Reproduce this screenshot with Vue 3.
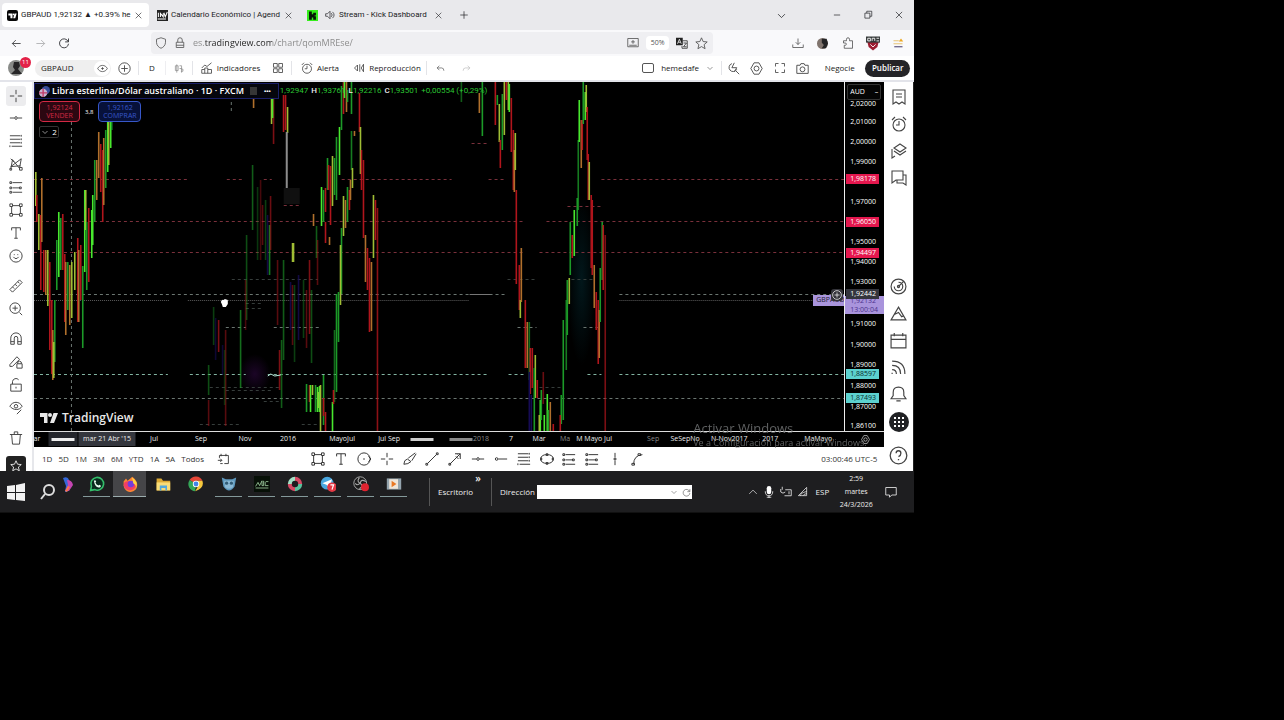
<script setup>
import { h } from 'vue'

const icons = {
  back: 'M14 8H2M7 3L2 8l5 5',
  forward: 'M2 8h12M9 3l5 5-5 5',
  reload: 'M13.500 6A6 6 0 1 0 14 9M14 2v4.500H9.500',
  close: 'M3 3l10 10M13 3L3 13',
  plus: 'M8 2v12M2 8h12',
  down: 'M3 6l5 5 5-5',
  up: 'M2 11l6-6 6 6',
  minus: 'M3 8h10',
  restore: 'M3 5h8v8H3zM6 5V2h8v8h-3',
  shield: 'M8 1l6 2v4c0 4-3 7-6 8-3-1-6-4-6-8V3z',
  lock: 'M3 7h10v7H3zM5 7V4a3 3 0 0 1 6 0v3M3 11h10',
  tray: 'M1 2h14v11H1zM3 11h10M8 4v5M5.500 6.500h5',
  star: 'M8 1l2 4.600 5 .5-3.800 3.300 1.200 5L8 11.800 3.600 14.400l1.200-5L1 6.100l5-.5z',
  download: 'M8 2v8M5 7l3 3 3-3M1 10v4h14v-4',
  puzzle: 'M2 5h4V3a2 2 0 0 1 4 0v2h4v10H3v-4h2a2 2 0 0 0 0-3H2z',
  eye: 'M1 8c3-6 11-6 14 0-3 6-11 6-14 0zM8 6v4M6 8h4',
  circlePlus: 'M8 1a7 7 0 1 1 0 14A7 7 0 0 1 8 1M8 4v8M4 8h8',
  candles: 'M4 2v12M2 4h4v7H2zM8 4h3v4H8M11 7v7M10 9h3v3h-3',
  indicator: 'M1 8l4-4 3 2 6-5M1 15v-5h4V8h4v2h5v5zM5 10v5M9 10v5',
  grid: 'M2 2h5v5H2zM9 2h5v5H9zM2 9h5v5H2zM9 9h5v5H9z',
  alarm: 'M8 3a6 6 0 1 1 0 12A6 6 0 0 1 8 3M8 5v4H5M1 4l3-3M15 4l-3-3',
  replay: 'M6 4L2 8l4 4zM9 3v10M14 3v10l-3-5z',
  undo: 'M6 3L2 7l4 4M2 7h8q4 0 4 5',
  redo: 'M10 3l4 4-4 4M14 7H6q-4 0-4 5',
  quick: 'M6 2a5 5 0 1 0 6 7M11 11l4 4M9 1L6 7h6l-3 5',
  hex: 'M5 1h6l4 7-4 7H5L1 8zM8 5a3 3 0 1 1 0 6 3 3 0 0 1 0-6',
  full: 'M2 6V2h4M10 2h4v4M14 10v4h-4M6 14H2v-4',
  camera: 'M1 4h4l1-2h4l1 2h4v10H1zM8 6a3 3 0 1 1 0 6 3 3 0 0 1 0-6',
  cross: 'M8 1v5M8 10v5M1 8h5M10 8h5',
  hline: 'M1 8h5M10 8h5M8 6.500a1.500 1.500 0 1 1 0 3 1.500 1.500 0 0 1 0-3',
  ray: 'M5 8h10M3 6.500a1.500 1.500 0 1 1 0 3 1.500 1.500 0 0 1 0-3',
  fib: 'M1 2h12M1 6h12M1 10h12M3 14h12M14 1v2M14 5v2M14 9v2M1 13v2',
  pattern: 'M2 14L4 3l8 10 2-11L2 11l11-1M2 2l4 4M1 13h2v2H1zM12 12h3v3h-3z',
  forecast: 'M4 3h11M4 9h8M4 14h11M3 2v2H1V2zM3 8v2H1V8zM3 13v2H1v-2zM12 8h2v2h-2z',
  box: 'M4 3h8M13 4v8M4 13h8M3 4v8M1 1h3v3H1zM12 1h3v3h-3zM12 12h3v3h-3zM1 12h3v3H1z',
  text: 'M3 5V2h10v3M8 2v12M6 14h4',
  smile: 'M8 1a7 7 0 1 1 0 14A7 7 0 0 1 8 1M6 6v1M10 6v1M5 9q3 4 6 0',
  ruler: 'M1 12L12 1l3 3L4 15zM4 9l2 2M7 6l2 2M10 3l2 2',
  zoom: 'M7 1a6 6 0 1 0 0 12A6 6 0 0 0 7 1M12 12l3 3M7 4v6M4 7h6',
  magnet: 'M2 14V7a6 6 0 0 1 12 0v7h-4V7a2 2 0 0 0-4 0v7zM2 11h4M10 11h4',
  penlock: 'M1 11L9 2l3 3-8 8H1zM9 10h6v5H9zM10 10V8q2-2 4 0v2',
  unlock: 'M2 7h12v8H2zM4 7V4a4 4 0 0 1 7-2M8 10v2',
  eyepen: 'M1 6c3-6 11-6 14 0-3 5-10 5-14 0zM8 4a2 2 0 1 1 0 4 2 2 0 0 1 0-4M9 15l5-5',
  trash: 'M1 4h14M3 4l1 11h8l1-11M6 4V1h4v3',
  list: 'M2 1h12v14l-3-2-3 2-3-2-3 2zM5 5h6M5 8h6',
  layers: 'M9 1l6 4-6 4-6-4zM3 8l6 4 6-4M1 6v9l3-2',
  chat: 'M1 1h11v9H5l-4 3zM12 5h3v10l-3-2H6v-3',
  target: 'M8 1a7 7 0 1 1 0 14A7 7 0 0 1 8 1M8 4a4 4 0 1 1-4 4M8 7a1 1 0 1 1 0 2 1 1 0 0 1 0-2M8 8l5-5',
  peak: 'M8 2l7 12H1zM4 9l4-2 3 4 2-1',
  calendar: 'M1 3h14v12H1zM1 7h14M4 1v3M12 1v3',
  feed: 'M2 2q12 0 12 12M2 6q8 0 8 8M2 10q4 0 4 4M2 13v1',
  bell: 'M1 12h14l-2-3V6q0-5-5-5T3 6v3zM6 14h4',
  help: 'M8 1a7 7 0 1 1 0 14A7 7 0 0 1 8 1M6 6q0-2 2-2t2 2-2 3M8 11v1',
  circle: 'M8 1a7 7 0 1 1 0 14A7 7 0 0 1 8 1M7 8h2M13 5l3 3-3 3',
  brush: 'M1 14q0-5 4-6l4 3q-3 3-8 3M6 7l8-6M10 10l5-8',
  trend: 'M3 13L13 3M1 13h2v2H1zM13 1h2v2h-2z',
  arrow: 'M2 14L14 2M8 2h6v6M9 5l3 3M11 3l2 2M1 13h2v2H1z',
  ellipse: 'M8 3q7 0 7 5t-7 5-7-5 7-5M7 2h2v2H7zM7 12h2v2H7zM0 7h2v2H0zM14 7h2v2h-2z',
  vline: 'M8 1v5M8 10v5M7 7h2v2H7z',
  curve: 'M3 14Q3 4 13 3M1 13h3v2H1zM8 2h3v2H8z',
  goto: 'M3 6V3h11v10H9M5 1v3M11 1v3M1 9h5M4 7l2 2-2 2M4 13h3',
  battery: 'M1 4v4q3 3 6 0M3 1v4M7 5h8v8H6M12 7v4',
  wifi: 'M2 14L14 2v12zM5 14q0-4 9-6M9 14q0-2 5-3',
  note: 'M1 2h14v10H9l-3 3v-3H1z',
  speaker: 'M1 6h3l4-4v12l-4-4H1zM10 5q3 3 0 6M12 3q5 5 0 10'
}
const Icon = ({ name, size = 13 }) =>
  h('svg', { class: 'icon', width: size, height: size, viewBox: '0 0 16 16', 'aria-hidden': 'true' },
    [h('path', { d: icons[name] })])
Icon.props = ['name', 'size']

const leftTools = [
  ['cross', 'hline', 'fib', 'pattern', 'forecast', 'box', 'text', 'smile'],
  ['ruler', 'zoom'],
  ['magnet', 'penlock', 'unlock', 'eyepen'],
  ['trash']
]
const rightTop = ['list', 'alarm', 'layers', 'chat']
const rightBottom = ['target', 'peak', 'calendar', 'feed', 'bell']
const drawTools = ['box', 'text', 'circle', 'cross', 'brush', 'trend', 'arrow', 'hline', 'ray', 'fib', 'ellipse', 'forecast', 'forecast', 'vline', 'curve']
const ranges = ['1D', '5D', '1M', '3M', '6M', 'YTD', '1A', '5A', 'Todos']

const view = { x: 34, y: 82, w: 811, h: 349 }
const topOf = y => ({ top: ((y - view.y) / view.h) * 100 + '%' })
const leftOf = x => ({ left: ((x - view.x) / 850) * 100 + '%' })

const prices = [
  [104, '2,02000'], [122, '2,01000'], [142, '2,00000'], [162, '1,99000'], [202, '1,97000'], [242, '1,95000'],
  [262, '1,94000'], [282, '1,93000'], [324, '1,91000'], [345, '1,90000'], [365, '1,89000'],
  [386, '1,88000'], [407, '1,87000'], [426, '1,86100'],
  [179, '1,98178', 'red'], [222, '1,96050', 'red'], [253, '1,94497', 'red'],
  [374, '1,88597', 'cyan'], [398, '1,87493', 'cyan']
]
const dates = [
  [37, 'ar'], [154, 'Jul'], [201, 'Sep'], [245, 'Nov'], [288, '2016'], [342, 'MayoJul'], [389, 'Jul Sep'],
  [481, '2018', 'dim'], [511, '7'], [539, 'Mar'], [565, 'Ma', 'dim'], [594, 'M Mayo Jul'], [653, 'Sep', 'dim'],
  [685, 'SeSepNo'], [729, 'N-Nov2017'], [770, '2017'], [818, 'MaMayo']
]

const levels = [
  [34, 190, 179, 'r'], [264, 272, 179, 'r'], [342, 452, 179, 'r'], [489, 506, 179, 'r'], [602, 845, 179, 'r'], [227, 243, 179, 'r'],
  [34, 526, 221, 'r'], [547, 845, 221, 'r'], [34, 525, 252, 'r'], [540, 845, 252, 'r'], [472, 488, 143, 'r'],
  [284, 300, 205, 'r'], [568, 602, 206, 'r'], [232, 318, 279, 'g'], [508, 538, 279, 'g'], [572, 596, 279, 'g'],
  [34, 506, 294, 'w'], [620, 845, 294, 'w'], [246, 262, 303, 'g'], [246, 262, 308, 'g'],
  [226, 246, 327, 'w'], [274, 320, 327, 'w'], [518, 537, 327, 'w'], [584, 602, 327, 'w'],
  [34, 168, 374, 't'], [190, 246, 374, 't'], [268, 490, 374, 't'], [509, 525, 374, 't'], [588, 602, 374, 't'], [620, 845, 374, 't'],
  [210, 280, 387, 'g'], [540, 563, 387, 'g'], [34, 845, 398, 'w'], [226, 274, 390, 'g'], [264, 280, 401, 'g'], [200, 242, 424, 'g'], [302, 320, 424, 'g']
]

/* [x, high, low, colour key, opacity] */
const bars = [
  [35, 172, 206, 'y'], [36, 195, 222, 'r'], [38, 214, 250, 'y'], [40, 215, 290, 'r'], [41, 178, 242, 'o'], [43, 250, 292, 'r'],
  [45, 250, 295, 'o'], [47, 250, 306, 'y'], [49, 262, 350, 'r'], [51, 300, 374, 'r'], [52, 330, 380, 'o'], [54, 300, 362, 'g'],
  [53, 342, 378, 'y'], [56, 240, 290, 'g'], [58, 212, 277, 'b'], [60, 218, 270, 'g'], [62, 214, 270, 'r'], [64, 254, 322, 'r'],
  [65, 262, 335, 'o'], [67, 262, 310, 'g'], [69, 265, 325, 'o'], [71, 262, 318, 'y'], [74, 252, 290, 'y'], [77, 238, 322, 'r'],
  [78, 250, 322, 'o'], [80, 245, 300, 'r'], [82, 266, 348, 'g'], [84, 190, 272, 'b'], [85, 190, 230, 'y'], [86, 222, 290, 'g'],
  [88, 208, 282, 'r'], [91, 210, 258, 'b'], [92, 195, 245, 'b'], [94, 160, 222, 'g'], [96, 160, 200, 'o'], [98, 132, 178, 'o'],
  [100, 144, 192, 'r'], [102, 150, 222, 'r'], [103, 138, 205, 'o'], [105, 130, 188, 'g'], [107, 112, 172, 'b'], [108, 112, 165, 'y'],
  [110, 110, 148, 'b'], [111, 110, 130, 'g'],
  [208, 365, 395, 'g', .5], [208, 400, 426, 'r', .5], [213, 307, 345, 'g', .4], [215, 318, 360, 'u', .6], [218, 320, 352, 'r', .7], [222, 345, 375, 'u', .6],
  [225, 330, 426, 'r', .5], [224, 350, 405, 'g', .3], [240, 310, 388, 'g', .7], [246, 235, 320, 'g', .5], [245, 280, 330, 'r', .4],
  [252, 165, 230, 'g', .6], [253, 90, 108, 'o'], [257, 187, 260, 'g', .35], [260, 180, 260, 'r', .4], [262, 205, 245, 'r', .5],
  [265, 200, 260, 'g', .4], [267, 215, 275, 'u', .8], [269, 225, 275, 'g', .8], [270, 196, 250, 'r', .6], [271, 94, 124, 'y'], [273, 95, 144, 'r', .7],
  [272, 94, 118, 'b'], [277, 260, 325, 'r', .5], [279, 350, 390, 'r', .7], [281, 340, 408, 'g', .6], [283, 260, 360, 'g', .6], [283, 95, 132, 'r'],
  [285, 95, 130, 'r'], [287, 107, 133, 'y'], [290, 282, 330, 'u', .8], [292, 285, 345, 'r', .5], [292, 243, 262, 'y'], [293, 243, 262, 'y'], [294, 285, 362, 'g', .4],
  [298, 275, 340, 'u', .8], [303, 280, 338, 'g', .4], [306, 290, 348, 'r', .5], [309, 260, 334, 'r', .7], [311, 290, 363, 'g', .5],
  [306, 384, 412, 'g'], [309, 385, 402, 'r'], [310, 385, 412, 'b'], [312, 385, 395, 'y'], [315, 385, 412, 'g'], [317, 387, 412, 'b'], [318, 392, 408, 'y'], [319, 386, 412, 'b'],
  [313, 214, 226, 'o'], [316, 226, 258, 'g', .6], [317, 240, 285, 'r', .5], [321, 187, 226, 'b'], [323, 190, 222, 'g'], [325, 188, 212, 'r'],
  [327, 158, 190, 'g'], [328, 165, 190, 'r'], [330, 166, 225, 'r'], [325, 222, 243, 'r'], [329, 237, 245, 'o'],
  [332, 156, 206, 'y'], [334, 158, 195, 'g'], [336, 137, 200, 'g'], [339, 127, 175, 'b'], [341, 86, 130, 'g'], [343, 82, 114, 'r'],
  [344, 82, 98, 'b'], [346, 82, 112, 'o'], [347, 90, 102, 'g'], [351, 82, 114, 'g'], [351, 131, 170, 'g', .8], [354, 131, 136, 'o'],
  [343, 196, 236, 'y'], [345, 200, 228, 'o'], [347, 187, 222, 'g'], [349, 190, 210, 'r'], [350, 180, 200, 'o'], [352, 168, 188, 'y'],
  [341, 228, 294, 'g'], [340, 245, 305, 'y'], [338, 292, 342, 'g'], [336, 294, 392, 'g'], [334, 330, 402, 'g', .7], [332, 402, 431, 'b'],
  [333, 390, 404, 'r'], [320, 385, 431, 'y'], [323, 375, 425, 'g'], [325, 412, 431, 'r'], [323, 398, 416, 'r'],
  [359, 93, 132, 'r'], [360, 127, 174, 'y'], [361, 150, 190, 'r'], [363, 160, 238, 'r'], [365, 235, 282, 'o'], [367, 248, 290, 'r'],
  [369, 258, 332, 'r'], [371, 262, 331, 'o'], [373, 195, 258, 'y'], [375, 200, 240, 'r'], [377, 208, 431, 'r', .8],
  [461, 82, 102, 'g', .6], [479, 93, 113, 'o'], [482, 82, 136, 'g'], [495, 82, 125, 'r'], [497, 95, 105, 'g'], [499, 104, 142, 'y'], [500, 140, 168, 'r'],
  [502, 94, 150, 'g'], [504, 82, 135, 'y'], [506, 82, 100, 'r'], [508, 82, 110, 'y'], [509, 84, 112, 'b'], [511, 98, 152, 'r'],
  [513, 130, 190, 'r'], [514, 150, 192, 'o'], [515, 133, 170, 'y'], [516, 190, 284, 'r'], [519, 265, 310, 'r'], [520, 300, 318, 'y'], [521, 248, 302, 'o'],
  [525, 300, 368, 'r'], [527, 322, 368, 'o'], [529, 322, 380, 'g', .7], [530, 348, 394, 'r'], [532, 348, 388, 'r'], [529, 372, 431, 'u'], [531, 395, 431, 'u'],
  [535, 355, 398, 'y'], [534, 368, 431, 'g'], [537, 380, 398, 'r'], [540, 400, 431, 'b'], [539, 415, 431, 'y'], [541, 390, 420, 'g'],
  [543, 372, 404, 'r', .6], [544, 415, 431, 'b'], [547, 394, 431, 'b'], [548, 410, 431, 'g'], [550, 402, 431, 'o'], [553, 424, 431, 'r'],
  [561, 395, 424, 'g'], [560, 415, 431, 'r'], [563, 320, 420, 'g'], [566, 300, 370, 'g', .8], [567, 280, 335, 'g'], [569, 278, 304, 'y'],
  [570, 222, 275, 'g'], [572, 235, 258, 'r'], [574, 210, 256, 'b'], [577, 198, 226, 'g'], [578, 140, 210, 'g', .8], [579, 100, 142, 'b'],
  [581, 120, 168, 'o'], [582, 120, 150, 'r'], [583, 82, 124, 'g'], [585, 92, 120, 'b'], [586, 85, 112, 'y'], [587, 107, 160, 'r'],
  [588, 154, 200, 'r'], [589, 162, 200, 'y'], [591, 195, 268, 'r'], [592, 200, 275, 'r'], [594, 265, 308, 'o'], [596, 292, 330, 'r'], [598, 300, 364, 'r'],
  [599, 310, 358, 'o'], [600, 268, 322, 'g'], [602, 222, 280, 'g'], [603, 225, 290, 'r'], [605, 235, 431, 'r', .7]
]
const quotes = [['', '1,92947'], ['H', '1,93761'], ['L', '1,92216'], ['C', '1,93501']]
</script>

<template>
  <div class="screen">
    <div class="desktop">
      <header class="tabs">
        <div class="tab active">
          <svg class="logo" viewBox="0 0 16 16"><rect width="16" height="16" rx="3" fill="#080808" /><path d="M2 5h6v7H5V8H2zM11 5h3l-2 7H9z" fill="#fff" /><circle cx="9.500" cy="6.500" r="1.300" fill="#fff" /></svg>
          <span class="tab-title">GBPAUD 1,92132 ▲ +0.39% he</span>
          <button aria-label="Cerrar pestaña"><Icon name="close" size="9" /></button>
        </div>
        <div class="tab">
          <svg class="logo" viewBox="0 0 16 16"><rect width="16" height="16" fill="#222" /><path d="M2 4v6M5 10V5l4 5V5M10 4l2 6 3-7M1 13h12" fill="none" stroke="#fff" stroke-width="1.500" /></svg>
          <span class="tab-title">Calendario Económico | Agend</span>
          <button aria-label="Cerrar pestaña"><Icon name="close" size="9" /></button>
        </div>
        <div class="tab">
          <svg class="logo" viewBox="0 0 16 16"><rect width="16" height="16" fill="#35ed1b" /><path d="M3 2h4v4h2V4h4v4h-2v1h2v5H9v-3H7v3H3z" fill="#061506" /></svg>
          <span class="sound"><Icon name="speaker" size="10" /></span>
          <span class="tab-title">Stream - Kick Dashboard</span>
          <button aria-label="Cerrar pestaña"><Icon name="close" size="9" /></button>
        </div>
        <button class="new-tab" aria-label="Nueva pestaña"><Icon name="plus" size="10" /></button>
        <div class="window-controls">
          <button class="list-tabs" aria-label="Listar pestañas"><Icon name="down" size="11" /></button>
          <button aria-label="Minimizar"><Icon name="minus" size="10" /></button>
          <button aria-label="Restaurar"><Icon name="restore" size="10" /></button>
          <button aria-label="Cerrar"><Icon name="close" size="10" /></button>
        </div>
      </header>

      <nav class="nav">
        <div class="history">
          <button aria-label="Atrás"><Icon name="back" size="11" /></button>
          <button class="faint" aria-label="Adelante"><Icon name="forward" size="11" /></button>
          <button aria-label="Recargar"><Icon name="reload" size="12" /></button>
        </div>
        <div class="url">
          <Icon name="shield" size="12" /><Icon name="lock" size="12" />
          <input aria-label="Dirección web" value="es.tradingview.com/chart/qomMREse/">
          <Icon name="tray" size="12" />
          <button class="percent">50%</button>
          <svg class="translate" viewBox="0 0 16 16"><path d="M0 1h9v10H0z" fill="#222" /><path d="M2 9l2.500-6L7 9M3 7h3" fill="none" stroke="#fff" /><path d="M9 5h6v10H8v-3M10 8h4l-4 5h4" fill="none" stroke="#222" /></svg>
          <Icon name="star" size="13" />
        </div>
        <div class="extensions">
          <button aria-label="Descargas"><Icon name="download" size="12" /></button>
          <button aria-label="Cuenta"><svg class="logo" viewBox="0 0 16 16"><circle cx="8" cy="8" r="8" fill="#80746d" /><path d="M7 1h7l2 7-3 7H7l3-5-3-3z" fill="#242426" /></svg></button>
          <button aria-label="Extensiones"><Icon name="puzzle" size="12" /></button>
          <button aria-label="Bloqueador"><svg width="14" height="15" viewBox="0 0 16 16"><path d="M1 4h14l-2 8-5 4-5-4z" fill="#9d1e32" /><path d="M0 0h16v7H0z" fill="#363a3a" /><path d="M2 2h3v3H2zM7 5V2h3v3M12 2h3M12 5h3M5 9l3 3 3-3" fill="none" stroke="#fff" /></svg></button>
          <button aria-label="Menú"><svg width="12" height="12" viewBox="0 0 16 16"><path d="M2 5h7M2 9h12" stroke="#e8c477" stroke-width="1.500" /><path d="M3 13h11" stroke="#554c77" stroke-width="1.500" /><path d="M9 6l3-4 3 4H9" fill="#eda823" /></svg></button>
        </div>
      </nav>

      <div class="toolbar">
        <button class="avatar" aria-label="Perfil">
          <svg width="16" height="16" viewBox="0 0 16 16"><circle cx="8" cy="8" r="8" fill="#898b88" /><path d="M6 2h5l1 4-2 3 4 5H3l4-4-2-3z" fill="#262526" /></svg>
          <span class="badge">11</span>
        </button>
        <button class="symbol"><span>GBPAUD</span><i><Icon name="eye" size="11" /></i></button>
        <button class="slot" aria-label="Comparar"><Icon name="circlePlus" /></button>
        <button class="slot ruled">D</button>
        <button class="slot ruled pale" aria-label="Velas"><Icon name="candles" size="11" /></button>
        <button class="labelled ruled wide"><Icon name="indicator" size="12" />Indicadores</button>
        <button class="slot" aria-label="Plantillas"><Icon name="grid" size="12" /></button>
        <button class="labelled ruled alert"><Icon name="alarm" size="12" />Alerta</button>
        <button class="labelled play"><Icon name="replay" size="12" />Reproducción</button>
        <button class="slot ruled" aria-label="Deshacer"><Icon name="undo" size="9" /></button>
        <button class="slot faint" aria-label="Rehacer"><Icon name="redo" size="9" /></button>
        <div class="toolbar-right">
          <label class="layout-name"><input type="checkbox">hemedafe<Icon name="down" size="8" /></label>
          <div class="tools ruled">
            <button aria-label="Búsqueda rápida"><Icon name="quick" /></button>
            <button aria-label="Configuración"><Icon name="hex" /></button>
            <button aria-label="Pantalla completa"><Icon name="full" size="12" /></button>
            <button aria-label="Captura"><Icon name="camera" /></button>
          </div>
          <button class="trade">Negocie</button>
          <button class="publish">Publicar</button>
        </div>
      </div>

      <main class="workspace">
        <aside class="left-rail">
          <div v-for="(group, g) in leftTools" :key="g" class="rail-group">
            <button v-for="t in group" :key="t" :class="{ selected: t === 'cross' }" :aria-label="t"><Icon :name="t" size="14" /></button>
          </div>
          <button class="favorite" aria-label="Favoritos"><Icon name="star" size="12" /></button>
        </aside>

        <section class="center">
          <div class="chart">
            <div class="plot">
              <svg class="canvas" viewBox="34 82 811 349" preserveAspectRatio="none" aria-label="Gráfico GBPAUD">
                <defs>
                  <radialGradient id="glowTeal"><stop offset="0" stop-color="#02171b" /><stop offset="1" stop-color="#000" /></radialGradient>
                  <radialGradient id="glowPurple"><stop offset="0" stop-color="#1b0526" /><stop offset="1" stop-color="#000" /></radialGradient>
                </defs>
                <ellipse cx="582" cy="280" rx="14" ry="85" fill="url(#glowTeal)" />
                <ellipse cx="255" cy="374" rx="16" ry="20" fill="url(#glowPurple)" />
                <path v-for="(l, i) in levels" :key="'l' + i" :class="'level-' + l[3]" :d="`M${l[0]} ${l[2] + .5}H${l[1]}`" />
                <path class="dots" d="M34 300.500H170M188 300.500H470M620 300.500H845" />
                <path class="level-w" d="M71.500 122V431M231.500 96V112" />
                <path d="M470 294.500H491" stroke="#777" />
                <rect v-for="(b, i) in bars" :key="'b' + i" :x="b[0]" :y="b[1]" width="1.600" :height="b[2] - b[1]" :class="'bar-' + b[3]" :opacity="b[4] || 1" />
                <rect x="286" y="132" width="2" height="56" fill="#8c8c8c" />
                <rect x="284" y="188" width="16" height="16" fill="#101010" />
                <path d="M268 376l3-2 4 2 6-1" stroke="#b8eadb" fill="none" />
                <path d="M221 302q1-3 3-2l1-1 3 1v4l-2 3h-3l-1-3z" fill="#fff" />
              </svg>
              <div class="legend">
                <div class="pair">
                  <svg width="11" height="11" viewBox="0 0 16 16"><circle cx="10" cy="6" r="6" fill="#384e9b" /><circle cx="6" cy="10" r="6" fill="#c7b4cf" /><path d="M6 4v12M0 10h12" stroke="#c23c69" stroke-width="2" /></svg>
                  <strong>Libra esterlina/Dólar australiano · 1D · FXCM</strong>
                  <span class="flag"></span><b>•••</b>
                </div>
                <div class="quotes"><span v-for="q in quotes" :key="q[1]"><b>{{ q[0] }}</b>{{ q[1] }}</span><span>+0,00554 (+0,29%)</span></div>
              </div>
              <div class="orders">
                <button class="sell"><span>1,92124</span><span>VENDER</span></button>
                <small>3,8</small>
                <button class="buy"><span>1,92162</span><span>COMPRAR</span></button>
              </div>
              <button class="collapse"><Icon name="down" size="8" />2</button>
              <div class="brand">
                <svg width="18" height="10" viewBox="0 0 36 20"><path d="M0 0h15v20H8V8H0zM27 0h9l-8 20h-8z" fill="#e8e8e8" /><circle cx="20" cy="4" r="4" fill="#e8e8e8" /></svg>
                <span>TradingView</span>
              </div>
              <span class="pair-tag" :style="topOf(301)">GBPAUD</span>
              <span class="add-level" :style="topOf(295)"><Icon name="circlePlus" size="10" /></span>
            </div>
            <div class="price-axis">
              <button class="currency">AUD<span>–</span></button>
              <span v-for="p in prices" :key="p[0]" :class="['price', p[2]]" :style="topOf(p[0])">{{ p[1] }}</span>
              <span class="current" :style="topOf(304)"><span>1,92132</span><span>13:00:04</span></span>
              <span class="price hover" :style="topOf(294)">1,92442</span>
            </div>
          </div>
          <div class="time-axis">
            <span v-for="d in dates" :key="d[0]" :class="['date', d[2]]" :style="leftOf(d[0])">{{ d[1] }}</span>
            <span class="date cursor-back" :style="leftOf(63)"><i></i></span>
            <span class="date cursor-date" :style="leftOf(107)">mar 21 Abr '15</span>
            <span class="date streak" :style="leftOf(422)"></span>
            <span class="date streak grey" :style="leftOf(461)"></span>
            <button class="axis-settings" aria-label="Ajustes del eje"><Icon name="hex" size="9" /></button>
          </div>
          <div class="bottom-bar">
            <div class="ranges"><button v-for="r in ranges" :key="r">{{ r }}</button></div>
            <button class="goto" aria-label="Ir a la fecha"><Icon name="goto" size="13" /></button>
            <div class="draw-tools"><button v-for="(t, i) in drawTools" :key="i" :aria-label="t"><Icon :name="t" size="14" /></button></div>
            <button class="clock">03:00:46 UTC-5</button>
          </div>
          <div class="activate"><p>Activar Windows</p><small>Ve a Configuración para activar Windows.</small></div>
        </section>

        <aside class="right-rail">
          <button v-for="t in rightTop" :key="t" :aria-label="t"><Icon :name="t" size="16" /></button>
          <div class="rail-lower">
            <button v-for="t in rightBottom" :key="t" :aria-label="t"><Icon :name="t" size="17" /></button>
            <button aria-label="Más"><svg width="20" height="20" viewBox="0 0 20 20"><circle cx="10" cy="10" r="10" fill="#202124" /><path d="M5 5h2v2H5zM9 5h2v2H9zM13 5h2v2h-2zM5 9h2v2H5zM9 9h2v2H9zM13 9h2v2h-2zM5 13h2v2H5zM9 13h2v2H9zM13 13h2v2h-2z" fill="#fff" /></svg></button>
            <button class="help" aria-label="Ayuda"><Icon name="help" size="19" /></button>
          </div>
        </aside>
      </main>

      <footer class="taskbar">
        <button class="start" aria-label="Inicio"><svg width="18" height="18" viewBox="0 0 18 18"><path d="M0 3l8-1v7H0zM9 2l9-2v9H9zM0 10h8v7l-8-1zM9 10h9v8l-9-1z" fill="#f2f2f2" /></svg></button>
        <button class="find" aria-label="Buscar"><svg width="16" height="18" viewBox="0 0 16 18"><circle cx="9" cy="7" r="5" fill="none" stroke="#ddd" stroke-width="2" /><path d="M5 11l-4 5" stroke="#ddd" stroke-width="2" /></svg></button>
        <svg class="copilot" width="10" height="16" viewBox="0 0 10 16"><path d="M0 1q5-2 6 2l1 6-3 6H2l1-6z" fill="#3568d8" /><path d="M4 3q5 0 6 5L6 14H2l3-6z" fill="#c445b2" /><path d="M2 14l3-5 2 1-3 5z" fill="#f77548" /></svg>
        <div class="apps">
          <button aria-label="WhatsApp"><svg viewBox="0 0 20 20"><path d="M2 18l1-5a8 8 0 1 1 4 4z" fill="#0a2b1e" stroke="#34bf6b" stroke-width="2" /><path d="M6 6q2-2 3 1l-1 1q1 3 4 4l1-1q3 1 1 3-6 2-8-8" fill="#e8fff0" /></svg></button>
          <button class="current-app" aria-label="Firefox"><svg viewBox="0 0 20 20"><path d="M2 7l3-4 2 3 6-5q6 5 6 10a8 8 0 0 1-17 1z" fill="#fb8434" /><path d="M3 8q5-3 8 0l6-2q2 11-7 12-6 0-8-6z" fill="#f13e67" /><circle cx="11" cy="10" r="4" fill="#743ddb" /><path d="M12 2q8 4 6 12-1-4-4-5 0-4-2-7" fill="#ffd443" /></svg></button>
          <button class="closed" aria-label="Explorador"><svg viewBox="0 0 20 20"><path d="M2 3h6l2 3h9v12H2z" fill="#ddaa35" /><path d="M2 8h17v10H2z" fill="#f9dc77" /><path d="M6 12h9v6h-2v-3H8v3H6z" fill="#51a8dc" /></svg></button>
          <button class="closed" aria-label="Chrome"><svg viewBox="0 0 20 20"><path d="M10 10L2 5a9 9 0 0 1 16 1h-8z" fill="#e74738" /><path d="M10 10l-1 9A9 9 0 0 1 2 5z" fill="#34a657" /><path d="M10 6h8q3 9-9 13l4-7z" fill="#f7c93d" /><circle cx="10" cy="10" r="4" fill="#fff" /><circle cx="10" cy="10" r="3" fill="#4384e6" /></svg></button>
          <button aria-label="Aplicación de datos"><svg viewBox="0 0 20 20"><path d="M1 2l5 2h8l5-2-2 11q-7 10-14 0z" fill="#5e98bd" /><path d="M4 6h12l-1 8q-5 4-10 0z" fill="#8ab8d4" /><circle cx="7" cy="9" r="2" fill="#315b75" /><circle cx="13" cy="9" r="2" fill="#315b75" /></svg></button>
          <button aria-label="Monitor"><svg viewBox="0 0 20 20"><path d="M0 0h20v20H0z" fill="#071007" /><path d="M2 13l3-5 2 4 3-6v6h2V6M15 7h3M14 7v5h4M2 15h16" fill="none" stroke="#a6d6a6" /></svg></button>
          <button aria-label="Tareas"><svg viewBox="0 0 20 20"><path d="M10 1a9 9 0 0 1 9 9h-5a4 4 0 0 0-4-4z" fill="#d64a65" /><path d="M19 10a9 9 0 0 1-9 9v-5a4 4 0 0 0 4-4z" fill="#59c29d" /><path d="M10 19a9 9 0 0 1-9-9h5a4 4 0 0 0 4 4z" fill="#d64a65" /><path d="M1 10a9 9 0 0 1 9-9v5a4 4 0 0 0-4 4z" fill="#a4e0c5" /></svg></button>
          <button aria-label="Telegram, 7 mensajes"><svg viewBox="0 0 20 20"><circle cx="9" cy="9" r="8" fill="#4aa7df" /><path d="M3 9l12-5-3 11-4-4z" fill="#fff" /><circle cx="15" cy="14" r="6" fill="#e43945" /><path d="M13 11h4l-2 6" fill="none" stroke="#fff" stroke-width="1.500" /></svg></button>
          <button aria-label="OBS"><svg viewBox="0 0 20 20"><circle cx="9" cy="9" r="8" fill="#1b1b1b" stroke="#aaa" stroke-width="1.200" /><path d="M9 9q-5-2-1-7M9 9q1-6 7-2M9 9q5 4-1 7M9 9q-4 4-6 0" fill="none" stroke="#aaa" stroke-width="1.400" /><circle cx="15" cy="14" r="5" fill="#df2430" /></svg></button>
          <button aria-label="Reproductor"><svg viewBox="0 0 20 20"><path d="M1 3h18v14H1z" fill="#94a4ae" /><path d="M4 4h11v12H4z" fill="#efe5d9" /><path d="M7 6l6 4-6 4z" fill="#e97824" /></svg></button>
        </div>
        <div class="desk-link"><span>Escritorio</span><sup>»</sup></div>
        <label class="address"><span>Dirección</span><input type="text"><span class="address-buttons"><Icon name="down" size="8" /><Icon name="reload" size="9" /></span></label>
        <div class="tray">
          <Icon name="up" size="10" />
          <svg width="12" height="14" viewBox="0 0 16 16"><rect x="5" y="0" width="6" height="11" rx="3" fill="#fff" /><path d="M3 7q0 6 5 6t5-6M8 13v3M5 15h6" fill="none" stroke="#fff" /></svg>
          <Icon name="battery" size="12" /><Icon name="wifi" size="11" /><span class="lang">ESP</span>
        </div>
        <time><span>2:59</span><span>martes</span><span>24/3/2026</span></time>
        <button class="notify" aria-label="Notificaciones"><Icon name="note" size="12" /></button>
      </footer>
    </div>
  </div>
</template>

<style>
html, body { margin: 0; background: #000; }
</style>

<style scoped>
.screen { min-height: 100vh; background: #000; font: 8px/10px "Open Sans", "Noto Sans", sans-serif; color: #202124; }
.screen *, .screen *::before, .screen *::after { box-sizing: border-box; }
.desktop { width: 71.2%; overflow: hidden; }
button, input { font: inherit; color: inherit; border: 0; background: none; padding: 0; margin: 0; }
button { display: flex; align-items: center; justify-content: center; flex: none; white-space: nowrap; }
svg { display: block; flex: none; }
.icon { fill: none; stroke: currentColor; stroke-width: 1.1; }
.logo { width: 11px; height: 11px; }
.faint { opacity: .4; }
.pale { opacity: .6; }

.tabs { display: flex; align-items: center; gap: 3px; height: 30px; padding-left: 2px; background: #e9e9ec; }
.tab { display: flex; align-items: center; gap: 3px; width: 147px; height: 24px; padding: 0 5px; border-radius: 4px; }
.tab.active { background: #fff; }
.tab-title { flex: 1; min-width: 0; white-space: nowrap; font-family: Roboto, sans-serif; }
.tab button { width: 12px; }
.sound { padding: 0 1px 0 4px; }
.new-tab { width: 24px; }
.window-controls { display: flex; margin-left: auto; }
.window-controls button { width: 31px; }
.window-controls .list-tabs { margin-right: 24px; }

.nav { display: flex; align-items: center; height: 26px; background: #f9f9fb; padding: 0 4px; }
.history { display: flex; width: 147px; }
.history button { width: 24px; }
.url { display: flex; flex: 1; align-items: center; gap: 7px; height: 22px; padding: 0 5px 0 4px; background: #efeff2; border-radius: 4px; color: #555; }
.url input { flex: 1; min-width: 0; font: 9px/14px "Open Sans", sans-serif; color: transparent; background: linear-gradient(90deg, #888 11px, #222 11px, #222 79px, #888 79px); background-clip: text; -webkit-background-clip: text; }
.percent { width: 23px; height: 14px; border-radius: 4px; background: #fff; font-size: 7px; }
.translate { width: 12px; height: 12px; }
.extensions { display: flex; margin-left: 72px; }
.extensions button { width: 25px; color: #555; }

.toolbar { display: flex; align-items: center; height: 26px; background: #fff; border-bottom: 2px solid #e3e4ea; padding: 0 4px 0 8px; color: #222; }
.toolbar .icon { color: #444; }
.avatar { position: relative; width: 27px; justify-content: flex-start; }
.badge { position: absolute; left: 12px; top: -3px; width: 11px; height: 11px; border-radius: 50%; background: #e32248; color: #fff; font-size: 6px; line-height: 11px; }
.symbol { width: 76px; height: 17px; justify-content: space-between; padding: 0 1px 0 6px; border-radius: 9px; background: #efefef; }
.symbol i { display: flex; align-items: center; justify-content: center; width: 16px; height: 15px; border-radius: 8px; background: #fff; }
.slot { width: 27px; height: 14px; }
.ruled { border-left: 1px solid #e3e4e8; }
.labelled { gap: 4px; height: 14px; }
.wide { width: 72px; padding-left: 4px; }
.alert { width: 57px; }
.play { width: 78px; }
.toolbar-right { display: flex; align-items: center; margin-left: auto; }
.layout-name { display: flex; align-items: center; gap: 7px; width: 79px; white-space: nowrap; }
.layout-name input { appearance: none; flex: none; width: 12px; height: 10px; border: 1px solid #555; border-radius: 2px; }
.tools { display: flex; }
.tools button { width: 23px; height: 14px; }
.trade { width: 51px; }
.publish { width: 45px; height: 17px; border-radius: 9px; background: #242427; color: #fff; font-weight: 600; }

.workspace { display: flex; height: 389px; }
.left-rail { display: flex; flex-direction: column; align-items: center; width: 34px; padding-top: 2px; overflow: hidden; background: #fff; color: #444; border-right: 2px solid #e6e7eb; }
.rail-group { margin-bottom: 7px; }
.rail-group button { width: 20px; height: 23px; }
.rail-group .selected { height: 20px; margin: 2px 0 0; border-radius: 3px; background: #ececee; }
.favorite { width: 20px; height: 20px; border-radius: 3px; background: #222; color: #fff; }
.right-rail { display: flex; flex-direction: column; align-items: center; width: 30px; padding-top: 1px; background: #fff; border-right: 1px solid #222; color: #444; }
.right-rail button { width: 26px; height: 27px; }
.rail-lower { margin-top: auto; padding-bottom: 2px; }
.rail-lower .help { margin-top: 7px; }

.center { position: relative; display: flex; flex: 1; flex-direction: column; min-width: 0; }
.chart { display: flex; flex: 1; background: #000; color: #fff; }
.plot { position: relative; flex: 1; min-width: 0; overflow: hidden; }
.canvas { position: absolute; width: 100%; height: 100%; }
.level-r, .level-w, .level-g, .level-t { fill: none; stroke-dasharray: 3 3; }
.level-r { stroke: #7a303b; }
.level-w { stroke: #6b7671; }
.level-g { stroke: #363d3b; }
.level-t { stroke: #83b5a3; }
.dots { fill: none; stroke: #5c5c5c; stroke-dasharray: 1 1; }
.bar-g { fill: #1c9a28; }
.bar-b { fill: #48e82e; }
.bar-r { fill: #b0151c; }
.bar-o { fill: #b0702c; }
.bar-y { fill: #a0bd35; }
.bar-u { fill: #160b54; }
.legend { position: relative; display: flex; align-items: center; height: 18px; gap: 1px; }
.pair { display: flex; align-items: center; gap: 2px; height: 16px; padding: 0 7px 0 4px; background: #05060d; border: 1px solid #1a1f68; white-space: nowrap; }
.pair strong { font-size: 9px; font-weight: 600; }
.pair b { font-size: 6px; }
.flag { width: 7px; height: 8px; margin: 0 5px 0 4px; background: #363636; }
.quotes { display: flex; gap: 3px; color: #2bc733; font-family: Roboto, sans-serif; white-space: nowrap; }
.quotes b { color: #eee; font-weight: 500; }
.orders { position: relative; display: flex; align-items: center; gap: 5px; padding: 1px 0 0 5px; }
.orders button { flex-direction: column; height: 21px; border: 1px solid; border-radius: 4px; font-size: 7px; line-height: 8px; }
.orders small { font-size: 6px; }
.sell { width: 41px; background: #2c0711; color: #d32944; }
.buy { width: 43px; background: #07113a; color: #3757c9; }
.collapse { position: relative; gap: 3px; width: 20px; height: 12px; margin: 4px 0 0 5px; border: 1px solid #333; border-radius: 2px; }
.brand { position: absolute; left: 6px; bottom: 5px; display: flex; align-items: center; gap: 4px; color: #e8e8e8; font: 600 12px/16px "Open Sans", sans-serif; }
.pair-tag { position: absolute; right: 0; width: 31px; height: 11px; margin-top: -6px; padding-left: 3px; background: #a994dc; color: #1c1830; font-size: 7px; }
.add-level { position: absolute; right: 1px; margin-top: -6px; padding: 1px; border-radius: 3px; background: #34343a; }
.price-axis { position: relative; width: 40px; border-left: 1px solid #eee; background: #000; }
.price { position: absolute; left: 1px; width: 33px; margin-top: -5px; padding-left: 4px; font-size: 7px; line-height: 10px; }
.red { background: #e5174e; }
.cyan { background: #5cd1cf; color: #092b2b; }
.hover { background: #34353d; }
.current { position: absolute; left: 0; right: 0; display: grid; margin-top: -8px; padding-left: 5px; background: #a994dc; color: #4c328d; font-size: 7px; line-height: 9px; }
.currency { position: relative; z-index: 1; width: 34px; height: 16px; margin: 2px 0 0 2px; padding: 0 2px; justify-content: space-between; border: 1px solid #333; border-radius: 2px; background: #050505; font-size: 7px; }

.time-axis { position: relative; height: 16px; background: #000; border-top: 1px solid #ddd; color: #eee; font-size: 7px; line-height: 14px; }
.date { position: absolute; top: 0; white-space: nowrap; transform: translateX(-50%); }
.dim { color: #888; }
.cursor-back { width: 29px; height: 14px; padding: 6px 3px; background: #24262c; }
.cursor-back i { display: block; height: 3px; background: #eee; }
.cursor-date { width: 57px; background: #34363d; text-align: center; }
.streak { top: 6px; width: 23px; height: 3px; background: #ccc; }
.grey { background: #888; }
.axis-settings { position: absolute; right: 14px; top: 3px; }

.bottom-bar { display: flex; align-items: center; height: 24px; padding: 0 6px 0 8px; background: #fff; color: #333; }
.ranges { display: flex; width: 162px; justify-content: space-between; }
.goto { width: 39px; }
.draw-tools { display: flex; flex: 1; margin: 0 171px 0 64px; }
.draw-tools button { flex: 1; }
.clock { width: 58px; }
.activate { position: absolute; right: 9px; bottom: 22px; width: 182px; color: #77797a; opacity: .8; pointer-events: none; white-space: nowrap; }
.activate p { margin: 0; font-size: 13px; line-height: 16px; }
.activate small { display: block; font-size: 9px; line-height: 13px; }

.taskbar { display: flex; height: 42px; padding: 0 15px 0 7px; background: #1e1e20; color: #eee; border-bottom: 1px solid #111; }
.start { width: 18px; }
.find { width: 18px; margin-left: 14px; }
.copilot { margin: 6px 0 0 6px; }
.apps { display: flex; margin-left: 7px; }
.apps button { align-items: center; width: 33px; height: 26px; background: linear-gradient(#84999a, #84999a) center bottom / 27px 1px no-repeat; }
.apps .closed { background: none; }
.apps .current-app { background: #454548; border-bottom: 1px solid #9cadae; }
.apps svg { width: 16px; height: 16px; }
.desk-link { display: flex; align-items: center; gap: 2px; width: 62px; margin: 7px 0 6px 19px; padding-left: 8px; border-left: 1px solid #555; }
.desk-link sup { align-self: flex-start; line-height: 1px; font-size: 10px; font-weight: 600; }
.address { display: flex; align-items: center; flex: 1; max-width: 201px; margin: 7px 0 6px; padding-left: 8px; border-left: 1px solid #555; }
.address > span:first-child { width: 37px; }
.address input { flex: 1; min-width: 0; height: 14px; background: #fff; color: #222; }
.address-buttons { display: flex; align-items: center; gap: 4px; height: 14px; padding-right: 1px; background: #fff; color: #555; }
.tray { display: flex; align-items: center; gap: 5px; margin-left: auto; }
.lang { padding-left: 3px; }
time { display: grid; align-content: center; width: 54px; font-size: 7px; line-height: 13px; text-align: center; }
.notify { width: 16px; }
</style>
